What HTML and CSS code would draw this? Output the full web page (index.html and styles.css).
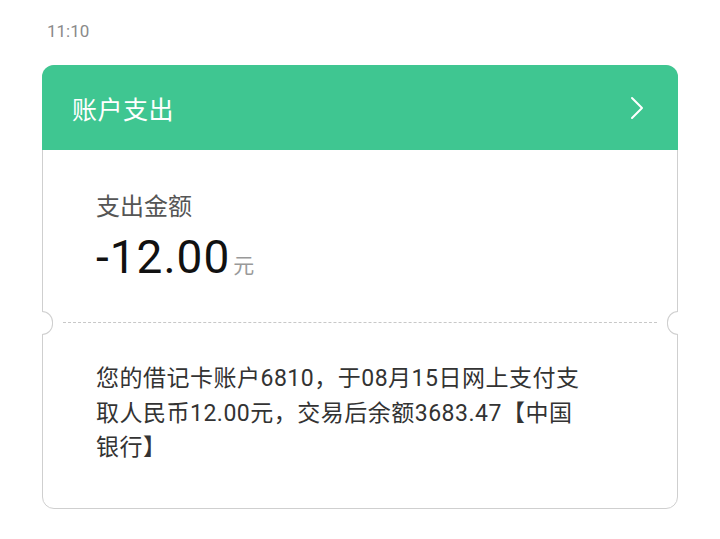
FILE: index.html
```html
<!DOCTYPE html>
<html lang="zh-CN">
<head>
    <meta charset="UTF-8">
    <title>账户支出</title>
    <link rel="stylesheet" href="styles.css">
</head>
<body>
    <div class="time">11:10</div>
    <div class="card">
        <div class="card-head">
            <span class="card-title">账户支出</span>
            <svg class="chevron" width="14" height="24" viewBox="0 0 14 24">
                <path d="M2 2 L12 12 L2 22" fill="none" stroke="#fff" stroke-width="2" stroke-linecap="round" stroke-linejoin="round"/>
            </svg>
        </div>
        <div class="amount-block">
            <div class="amount-label">支出金额</div>
            <div class="amount">-12.00<span class="unit">元</span></div>
        </div>
        <div class="divider"></div>
        <div class="message">
            您的借记卡账户6810，于08月15日网上支付支<br>取人民币12.00元，交易后余额3683.47【中国<br>银行】
        </div>
    </div>
</body>
</html>
```

FILE: styles.css
```css
body {
    margin: 0;
    background: #fff;
    font-family: Roboto, "Noto Sans CJK SC", sans-serif;
}
.time {
    padding: 20px 0 0 47px;
    height: 65px;
    box-sizing: border-box;
    font-size: 17px;
    line-height: 22px;
    color: #8a8a8a;
}
.card {
    margin: 0 42px;
    border: 1px solid #cfcfcf;
    border-radius: 12px;
    background: #fff;
}
.card-head {
    background: #3fc691;
    height: 85px;
    margin: -1px -1px 0 -1px;
    border-radius: 12px 12px 0 0;
    display: flex;
    align-items: center;
    justify-content: space-between;
    padding: 0 34px 0 30px;
}
.card-title {
    color: #fff;
    font-size: 25px;
    letter-spacing: 0.5px;
}
.amount-block {
    padding: 40px 54px 0 53px;
    height: 172px;
    box-sizing: border-box;
    display: flex;
    flex-direction: column;
    gap: 6px;
}
.amount-label {
    font-size: 24px;
    line-height: 34px;
    color: #555;
}
.amount {
    font-size: 46px;
    line-height: 54px;
    color: #111;
    letter-spacing: 1px;
}
.unit {
    font-size: 21px;
    color: #999;
    margin-left: 3px;
    letter-spacing: 0;
}
.divider {
    position: relative;
    height: 0;
    margin: 0 20px;
    border-top: 1px dashed #c8c8c8;
}
.divider::before, .divider::after {
    content: "";
    position: absolute;
    top: -12px;
    width: 10px;
    height: 22px;
    background: #fff;
    border: 1px solid #cfcfcf;
}
.divider::before {
    left: -21px;
    border-left: none;
    border-radius: 0 12px 12px 0;
}
.divider::after {
    right: -21px;
    border-right: none;
    border-radius: 12px 0 0 12px;
}
.message {
    padding: 39px 40px 42px 53px;
    font-size: 23px;
    line-height: 34.5px;
    letter-spacing: 0.5px;
    color: #333;
}
```
